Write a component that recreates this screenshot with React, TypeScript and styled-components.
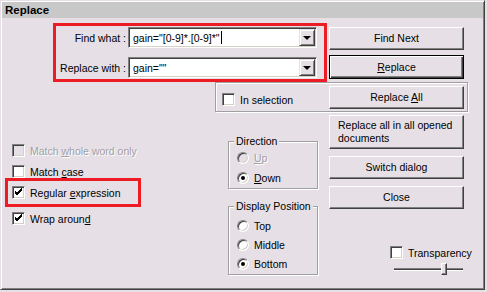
import styled, { createGlobalStyle } from 'styled-components';

const face = '#e6e0e6';
const red = '#ed1c24';

const GlobalStyle = createGlobalStyle`
  html, body { margin: 0; padding: 0; background: ${face}; }
  body {
    font-family: "Liberation Sans", Arial, sans-serif;
    font-size: 10.5px;
    color: #000;
  }
  * { box-sizing: border-box; }
`;

type RowProps = { $top?: number; $disabled?: boolean };

function Check() {
  return (
    <svg width="13" height="13" viewBox="0 0 13 13" shapeRendering="crispEdges">
      <polyline points="3,5 5,7 10,2" fill="none" stroke="#000" strokeWidth="1" />
      <polyline points="3,6 5,8 10,3" fill="none" stroke="#000" strokeWidth="1" />
      <polyline points="3,7 5,9 10,4" fill="none" stroke="#000" strokeWidth="1" />
    </svg>
  );
}

function CheckOption({ label, checked, disabled, top }: { label: React.ReactNode; checked?: boolean; disabled?: boolean; top?: number }) {
  return (
    <CheckRow $top={top} $disabled={disabled}>
      <Box $disabled={disabled}>{checked && <Check />}</Box>
      <span>{label}</span>
    </CheckRow>
  );
}

function RadioOption({ label, checked, disabled, top }: { label: React.ReactNode; checked?: boolean; disabled?: boolean; top?: number }) {
  return (
    <RadioRow $top={top} $disabled={disabled}>
      <Radio $disabled={disabled}>{checked && <Dot />}</Radio>
      <span>{label}</span>
    </RadioRow>
  );
}

function ComboBox({ value, caret }: { value: string; caret?: boolean }) {
  return (
    <Combo>
      <ComboText>
        {value}
        {caret && <Caret />}
      </ComboText>
      <DropButton>
        <Arrow />
      </DropButton>
    </Combo>
  );
}

export default function App() {
  return (
    <>
      <GlobalStyle />
      <Window>
        <TitleBar>Replace</TitleBar>
        <Body>
          <TopRow>
            <Highlight>
              <FieldRow>
                <FieldLabel>Find what :</FieldLabel>
                <ComboBox value={'gain="[0-9]*.[0-9]*"'} caret />
              </FieldRow>
              <FieldRow $top={9}>
                <FieldLabel>Replace with :</FieldLabel>
                <ComboBox value={'gain=""'} />
              </FieldRow>
            </Highlight>
            <ButtonStack>
              <Button>Find Next</Button>
              <Button $default>
                <u>R</u>eplace
              </Button>
            </ButtonStack>
          </TopRow>

          <SelectionFrame>
            <CheckOption label="In selection" />
            <Button>
              Replace <u>A</u>ll
            </Button>
          </SelectionFrame>

          <BottomRow>
            <Options>
              <CheckOption
                top={32}
                disabled
                label={
                  <>
                    Match <u>w</u>hole word only
                  </>
                }
              />
              <CheckOption
                top={8}
                label={
                  <>
                    Match <u>c</u>ase
                  </>
                }
              />
              <OptionHighlight>
                <CheckOption
                  checked
                  label={
                    <>
                      Regular <u>e</u>xpression
                    </>
                  }
                />
              </OptionHighlight>
              <CheckOption
                top={5}
                checked
                label={
                  <>
                    Wrap aroun<u>d</u>
                  </>
                }
              />
            </Options>

            <Groups>
              <Group $height={48}>
                <Legend>Direction</Legend>
                <RadioOption
                  top={3}
                  disabled
                  label={
                    <>
                      <u>U</u>p
                    </>
                  }
                />
                <RadioOption
                  top={7}
                  checked
                  label={
                    <>
                      <u>D</u>own
                    </>
                  }
                />
              </Group>
              <Group $height={69} $top={17}>
                <Legend>Display Position</Legend>
                <RadioOption top={6} label="Top" />
                <RadioOption top={6} label="Middle" />
                <RadioOption top={6} checked label="Bottom" />
              </Group>
            </Groups>

            <Actions>
              <Button $multi>
                Replace all in all opened
                <br />
                documents
              </Button>
              <Button $top={7}>Switch dialog</Button>
              <Button $top={7}>Close</Button>
              <Transparency>
                <CheckOption label="Transparency" />
              </Transparency>
              <Slider>
                <Thumb />
              </Slider>
            </Actions>
          </BottomRow>
        </Body>
      </Window>
    </>
  );
}

const Window = styled.div`
  width: 485px;
  height: 290px;
  border: 1px solid;
  border-color: ${face} #404040 #404040 ${face};
  box-shadow: inset 1px 1px #fff, inset -1px -1px #808080;
  padding: 1px;
  display: flex;
  flex-direction: column;
`;

const TitleBar = styled.div`
  height: 16px;
  line-height: 16px;
  padding-left: 3px;
  background: #c8c8c8;
  font-weight: bold;
  font-size: 11.5px;
`;

const Body = styled.div`
  flex: 1;
  display: flex;
  flex-direction: column;
`;

const TopRow = styled.div`
  display: flex;
  align-items: flex-start;
  margin-top: 5px;
  padding-left: 51px;
`;

const Highlight = styled.div`
  position: relative;
  z-index: 1;
  width: 274px;
  height: 59px;
  border: 3px solid ${red};
  padding: 1px 0 0;
`;

const FieldRow = styled.div<RowProps>`
  display: flex;
  align-items: center;
  gap: 2px;
  margin-top: ${(p) => p.$top ?? 0}px;
`;

const FieldLabel = styled.label`
  width: 70px;
  text-align: right;
  white-space: nowrap;
`;

const Combo = styled.div`
  width: 189px;
  height: 21px;
  display: flex;
  align-items: stretch;
  background: #fff;
  border: 1px solid;
  border-color: #808080 #fff #fff #808080;
  box-shadow: inset 1px 1px #404040, inset -1px -1px #d4d0c8;
  padding: 1px;
`;

const ComboText = styled.div`
  flex: 1;
  display: flex;
  align-items: center;
  padding-left: 3px;
  white-space: nowrap;
`;

const Caret = styled.span`
  display: inline-block;
  width: 1px;
  height: 13px;
  background: #000;
  margin-left: 1px;
`;

const DropButton = styled.div`
  width: 16px;
  display: flex;
  align-items: center;
  justify-content: center;
  background: ${face};
  border: 1px solid;
  border-color: ${face} #404040 #404040 ${face};
  box-shadow: inset 1px 1px #fff, inset -1px -1px #808080;
`;

const Arrow = styled.span`
  width: 0;
  height: 0;
  border-left: 4px solid transparent;
  border-right: 4px solid transparent;
  border-top: 4px solid #000;
  margin-top: 1px;
`;

const ButtonStack = styled.div`
  display: flex;
  flex-direction: column;
  gap: 5px;
  margin: 4px 0 0 2px;
`;

const Button = styled.button<{ $default?: boolean; $multi?: boolean; $top?: number }>`
  width: 135px;
  height: ${(p) => (p.$multi ? 34 : p.$default ? 24 : 23)}px;
  margin: ${(p) => p.$top ?? 0}px 0 0;
  padding: ${(p) => (p.$multi ? '0 0 0 8px' : '0')};
  font: inherit;
  color: #000;
  line-height: 13px;
  text-align: ${(p) => (p.$multi ? 'left' : 'center')};
  background: ${face};
  border: 1px solid;
  border-color: ${(p) => (p.$default ? '#000' : '#fff #404040 #404040 #fff')};
  box-shadow: ${(p) =>
    p.$default
      ? 'inset 1px 1px #fff, inset -1px -1px #404040, inset -2px -2px #808080'
      : 'inset -1px -1px #808080'};
  flex-shrink: 0;
`;

const SelectionFrame = styled.div`
  width: 253px;
  height: 30px;
  margin-left: 213px;
  display: flex;
  align-items: flex-start;
  justify-content: space-between;
  padding: 3px 3px 0 6px;
  border: 1px solid #a0a0a0;
  box-shadow: inset 1px 1px #fff, 1px 1px #fff;

  & > div:first-child {
    margin-top: 7px;
  }
`;

const CheckRow = styled.div<RowProps>`
  display: flex;
  align-items: center;
  gap: 5px;
  height: 13px;
  margin-top: ${(p) => p.$top ?? 0}px;
  white-space: nowrap;
  color: ${(p) => (p.$disabled ? '#a29ea4' : '#000')};
  text-shadow: ${(p) => (p.$disabled ? '1px 1px #fff' : 'none')};
`;

const Box = styled.span<{ $disabled?: boolean }>`
  width: 13px;
  height: 13px;
  flex-shrink: 0;
  display: block;
  background: ${(p) => (p.$disabled ? face : '#fff')};
  border: 1px solid;
  border-color: #808080 #fff #fff #808080;
  box-shadow: inset 1px 1px #404040, inset -1px -1px #d4d0c8;
  position: relative;

  svg {
    position: absolute;
    left: -1px;
    top: -1px;
  }
`;

const BottomRow = styled.div`
  display: flex;
  align-items: flex-start;
`;

const Options = styled.div`
  width: 223px;
  margin-left: 3px;
  display: flex;
  flex-direction: column;
  align-items: flex-start;

  & > div {
    margin-left: 7px;
  }
`;

const OptionHighlight = styled.div`
  && {
    margin-left: 0;
  }
  width: 136px;
  height: 29px;
  border: 3px solid ${red};
  padding-left: 4px;
  display: flex;
  align-items: center;
`;

const Groups = styled.div`
  width: 90px;
  margin-top: 29px;
  display: flex;
  flex-direction: column;
`;

const Group = styled.div<{ $height: number; $top?: number }>`
  height: ${(p) => p.$height}px;
  margin-top: ${(p) => p.$top ?? 0}px;
  border: 1px solid #a0a0a0;
  box-shadow: inset 1px 1px #fff, 1px 1px #fff;
  padding-left: 8px;
  display: flex;
  flex-direction: column;
`;

const Legend = styled.div`
  align-self: flex-start;
  margin: -7px 0 0 -3px;
  padding: 0 2px;
  line-height: 13px;
  background: ${face};
  white-space: nowrap;
`;

const RadioRow = styled.div<RowProps>`
  display: flex;
  align-items: center;
  gap: 5px;
  height: 13px;
  margin-top: ${(p) => p.$top ?? 0}px;
  color: ${(p) => (p.$disabled ? '#a29ea4' : '#000')};
  text-shadow: ${(p) => (p.$disabled ? '1px 1px #fff' : 'none')};
`;

const Radio = styled.span<{ $disabled?: boolean }>`
  width: 12px;
  height: 12px;
  flex-shrink: 0;
  border-radius: 50%;
  background: ${(p) => (p.$disabled ? face : '#fff')};
  border: 1px solid;
  border-color: #808080 #fff #fff #808080;
  box-shadow: inset 1px 1px #404040, inset -1px -1px #d4d0c8;
  display: flex;
  align-items: center;
  justify-content: center;
`;

const Dot = styled.span`
  width: 4px;
  height: 4px;
  border-radius: 50%;
  background: #000;
`;

const Actions = styled.div`
  margin: 3px 0 0 11px;
  display: flex;
  flex-direction: column;
`;

const Transparency = styled.div`
  margin: 37px 0 0 61px;
`;

const Slider = styled.div`
  position: relative;
  width: 69px;
  height: 12px;
  margin: 4px 0 0 65px;

  &::before {
    content: '';
    position: absolute;
    left: 0;
    right: 0;
    top: 5px;
    height: 3px;
    border-top: 1px solid #808080;
    border-bottom: 1px solid #fff;
    background: #404040;
    box-sizing: border-box;
  }
`;

const Thumb = styled.div`
  position: relative;
  width: 6px;
  height: 12px;
  margin-left: 47px;
  background: ${face};
  border: 1px solid;
  border-color: #fff #404040 #404040 #fff;
  box-shadow: inset -1px -1px #808080;
`;
